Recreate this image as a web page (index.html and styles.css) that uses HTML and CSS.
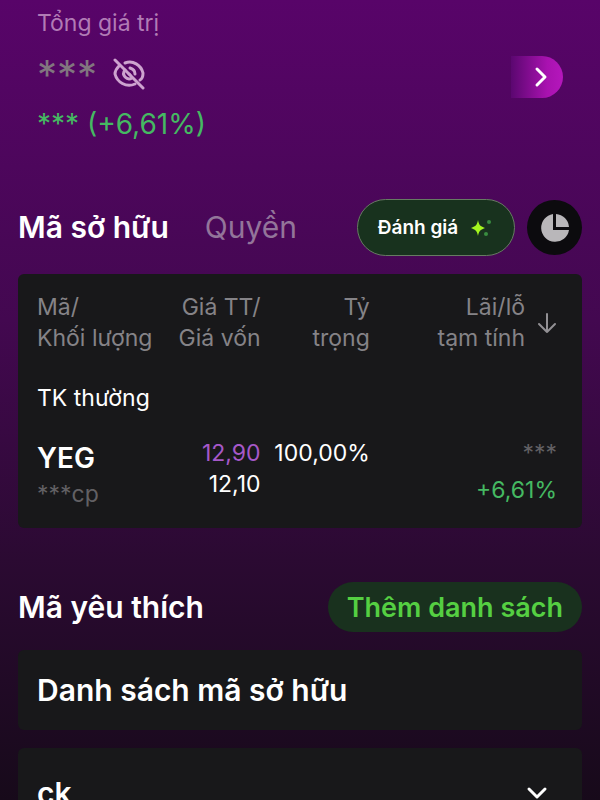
FILE: index.html
```html
<!DOCTYPE html>
<html lang="vi">
<head>
    <meta charset="UTF-8">
    <meta name="viewport" content="width=device-width, initial-scale=1.0">
    <title>Tài sản</title>
    <link rel="stylesheet" href="styles.css">
</head>
<body>
    <main class="app">
        <section class="summary">
            <div class="summary-info">
                <p class="summary-label">Tổng giá trị</p>
                <div class="summary-value">
                    <span class="hidden-value">***</span>
                    <button class="icon-btn" aria-label="Hiện số dư">
                        <svg width="32" height="32" viewBox="0 0 32 32" fill="none" stroke="#cda3cf" stroke-width="3" stroke-linecap="round">
                            <path d="M2 2L30 30"/>
                            <path d="M12 5C20 2 28 7 30 15C30 19 29 21 27 22"/>
                            <path d="M6 8C3 11 2 13 2 16C4 24 13 30 22 26"/>
                            <path d="M17 10C20 11 22 13 22 16M12 12C8 17 14 23 19 20"/>
                            <path d="M16 16L17 17"/>
                        </svg>
                    </button>
                </div>
                <p class="summary-profit">*** (+6,61%)</p>
            </div>
            <button class="next-btn" aria-label="Xem chi tiết">
                <svg width="20" height="22" viewBox="0 0 20 22" fill="none" stroke="#fff" stroke-width="3" stroke-linecap="round" stroke-linejoin="round">
                    <path d="M6 3L14 11L6 19"/>
                </svg>
            </button>
        </section>

        <nav class="tabs">
            <button class="tab active">Mã sở hữu</button>
            <button class="tab">Quyền</button>
            <button class="rate-btn">
                Đánh giá
                <svg width="24" height="22" viewBox="0 0 24 22">
                    <path d="M8 3C9 8 10 9 15 11C10 13 9 14 8 19C7 14 6 13 1 11C6 9 7 8 8 3Z" fill="#a4f51f"/>
                    <circle cx="19" cy="5" r="2" fill="#398d40"/>
                    <circle cx="16" cy="17" r="2" fill="#398d40"/>
                </svg>
            </button>
            <button class="chart-btn" aria-label="Biểu đồ">
                <svg width="32" height="32" viewBox="0 0 32 32" fill="#b9b7ba">
                    <path d="M14 2V18H30A14 14 0 1 1 14 2Z"/>
                    <path d="M17 2A14 14 0 0 1 30 15H17Z"/>
                </svg>
            </button>
        </nav>

        <section class="card">
            <table class="holdings">
                <thead>
                    <tr>
                        <th class="col-code">Mã/<br>Khối lượng</th>
                        <th class="col-price">Giá TT/<br>Giá vốn</th>
                        <th class="col-weight">Tỷ<br>trọng</th>
                        <th class="col-profit">
                            <div class="sort">
                                <span>Lãi/lỗ<br>tạm tính</span>
                                <svg width="20" height="22" viewBox="0 0 20 22" fill="none" stroke="#929094" stroke-width="2" stroke-linecap="round" stroke-linejoin="round">
                                    <path d="M10 2V20M2 12L10 20L18 12"/>
                                </svg>
                            </div>
                        </th>
                    </tr>
                </thead>
                <tbody>
                    <tr class="account">
                        <td colspan="4">TK thường</td>
                    </tr>
                    <tr>
                        <td>
                            <div class="code">YEG</div>
                            <div class="muted">***cp</div>
                        </td>
                        <td>
                            <div class="ceiling">12,90</div>
                            <div>12,10</div>
                        </td>
                        <td>100,00%</td>
                        <td class="profit">
                            <div class="muted">***</div>
                            <div class="up">+6,61%</div>
                        </td>
                    </tr>
                </tbody>
            </table>
        </section>

        <section class="favorites">
            <div class="favorites-head">
                <h2>Mã yêu thích</h2>
                <button class="add-btn">Thêm danh sách</button>
            </div>
            <button class="list-item">Danh sách mã sở hữu</button>
            <button class="list-item expandable">
                ck
                <svg width="22" height="14" viewBox="0 0 22 14" fill="none" stroke="#fff" stroke-width="3" stroke-linecap="round" stroke-linejoin="round">
                    <path d="M3 3L11 11L19 3"/>
                </svg>
            </button>
        </section>
    </main>
</body>
</html>
```

FILE: styles.css
```css
* {
    box-sizing: border-box;
}

body {
    margin: 0;
    font-family: Inter, "Noto Sans", sans-serif;
    font-size: 23px;
    line-height: 31px;
    color: #fff;
}

p, h2 {
    margin: 0;
}

button {
    padding: 0;
    border: none;
    background: none;
    color: inherit;
    font: inherit;
    cursor: pointer;
}

svg {
    display: block;
    flex-shrink: 0;
}

.app {
    height: 100vh;
    padding: 8px 18px 0;
    overflow-y: auto;
    scrollbar-width: none;
    background: linear-gradient(#580469, #430850 40%, #2b0a32 70%, #170a1a);
}

.summary {
    display: flex;
    justify-content: space-between;
    align-items: center;
    padding: 0 19px;
}

.summary-label {
    color: #b17bb5;
}

.summary-value {
    display: flex;
    align-items: center;
    gap: 16px;
    height: 70px;
}

.hidden-value {
    font-size: 40px;
    color: #81757f;
}

.summary-profit {
    font-size: 28px;
    color: #45b962;
}

.next-btn {
    display: flex;
    align-items: center;
    justify-content: center;
    width: 52px;
    height: 42px;
    margin-top: 5px;
    padding-left: 8px;
    border-radius: 0 21px 21px 0;
    background: linear-gradient(90deg, #5b0770, #a912b0 70%, #b517bc);
}

.tabs {
    display: flex;
    align-items: center;
    margin-top: 59px;
}

.tab {
    margin-right: 36px;
    font-size: 30px;
    color: #93759a;
}

.tab.active {
    font-weight: 600;
    color: #fff;
}

.rate-btn {
    display: flex;
    align-items: center;
    justify-content: center;
    gap: 12px;
    width: 158px;
    height: 57px;
    margin-left: auto;
    border: 1px solid #667b62;
    border-radius: 29px;
    background: #18321e;
    font-size: 19px;
    font-weight: 600;
}

.chart-btn {
    display: flex;
    align-items: center;
    justify-content: center;
    width: 55px;
    height: 55px;
    margin-left: 12px;
    border-radius: 50%;
    background: #0c0b0e;
}

.card {
    margin-top: 18px;
    padding: 18px 25px 18px 19px;
    border-radius: 6px;
    background: #18181a;
}

.holdings {
    width: 100%;
    table-layout: fixed;
    border-collapse: collapse;
    text-align: right;
}

.holdings th,
.holdings td {
    padding: 0;
    vertical-align: top;
    font-weight: 400;
}

.holdings th {
    color: #858387;
}

.holdings th:first-child,
.holdings td:first-child {
    text-align: left;
}

.col-code {
    width: 24%;
}

.col-price {
    width: 19%;
}

.col-weight {
    width: 21%;
}

.sort {
    display: flex;
    align-items: center;
    justify-content: flex-end;
    gap: 12px;
}

.holdings .account td {
    padding: 29px 0 24px;
}

.code {
    padding: 5px 0;
    font-size: 28px;
    font-weight: 600;
}

.holdings .muted {
    color: #626064;
}

.ceiling {
    color: #a658c9;
}

.profit .up {
    padding-top: 6px;
    color: #45b962;
}

.favorites-head {
    display: flex;
    align-items: center;
    justify-content: space-between;
    margin-top: 54px;
}

.favorites-head h2 {
    font-size: 30px;
    font-weight: 600;
}

.add-btn {
    height: 50px;
    padding: 0 19px;
    border-radius: 25px;
    background: #19311e;
    color: #55cf42;
    font-size: 27px;
    font-weight: 600;
}

.list-item {
    display: flex;
    align-items: center;
    justify-content: space-between;
    width: 100%;
    height: 80px;
    margin-top: 18px;
    padding: 0 34px 0 19px;
    border-radius: 6px;
    background: #18181a;
    font-size: 30px;
    font-weight: 600;
}

.list-item.expandable {
    height: 90px;
}
```
